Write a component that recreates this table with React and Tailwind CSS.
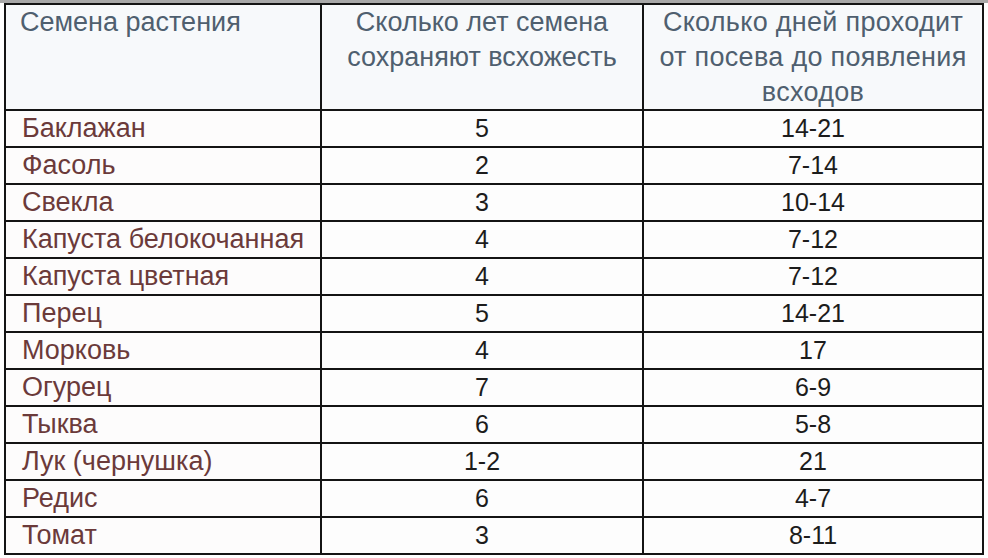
import React from "react";

const rows = [
  ["Баклажан", "5", "14-21"],
  ["Фасоль", "2", "7-14"],
  ["Свекла", "3", "10-14"],
  ["Капуста белокочанная", "4", "7-12"],
  ["Капуста цветная", "4", "7-12"],
  ["Перец", "5", "14-21"],
  ["Морковь", "4", "17"],
  ["Огурец", "7", "6-9"],
  ["Тыква", "6", "5-8"],
  ["Лук (чернушка)", "1-2", "21"],
  ["Редис", "6", "4-7"],
  ["Томат", "3", "8-11"],
];

export default function App() {
  return (
    <div
      className="w-[988px] h-[558px] bg-white overflow-hidden flex flex-col"
      style={{ fontFamily: '"Liberation Sans", "Noto Sans", sans-serif' }}
    >
      <div className="h-[3px] bg-[#a8a8a8] shrink-0" />
      <div className="pl-[4px]">
        <div className="w-[980px] grid grid-cols-[314px_320px_338px] gap-[2px] p-[2px] bg-[#141414]">
          <div className="h-[104px] bg-[#f7f9fb] text-[#4f5f6f] text-[27px] leading-[35px] px-[14px] whitespace-nowrap">
            Семена растения
          </div>
          <div className="h-[104px] bg-[#f7f9fb] text-[#4f5f6f] text-[27px] leading-[35px] text-center whitespace-nowrap">
            Сколько лет семена<br />сохраняют всхожесть
          </div>
          <div className="h-[104px] bg-[#f7f9fb] text-[#4f5f6f] text-[27px] leading-[35px] text-center whitespace-nowrap tracking-[0.3px]">
            Сколько дней проходит<br />от посева до появления<br />всходов
          </div>
          {rows.map((r) => (
            <React.Fragment key={r[0]}>
              <div className="h-[35px] bg-[#fdfcfc] text-[#6b3a3a] text-[27px] leading-[35px] px-[16px] whitespace-nowrap">
                {r[0]}
              </div>
              <div className="h-[35px] bg-[#fdfdfd] text-[#1c1c1c] text-[25px] leading-[35px] text-center">
                {r[1]}
              </div>
              <div className="h-[35px] bg-[#fdfdfd] text-[#1c1c1c] text-[25px] leading-[35px] text-center">
                {r[2]}
              </div>
            </React.Fragment>
          ))}
        </div>
      </div>
    </div>
  );
}
